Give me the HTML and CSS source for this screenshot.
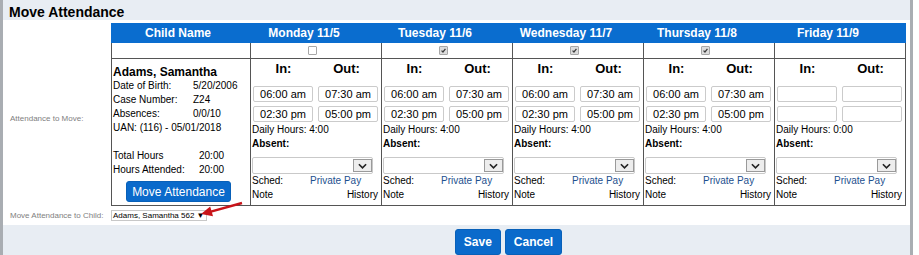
FILE: index.html
```html
<!DOCTYPE html>
<html lang="en">
<head>
    <meta charset="UTF-8">
    <title>Move Attendance</title>
    <link rel="stylesheet" href="styles.css">
</head>
<body>

<div class="dialog">
    <div class="title">Move Attendance</div>

    <div class="content">
        <div class="form-row">
            <div class="label label-mid">Attendance to Move:</div>
            <table class="att">
                <colgroup>
                    <col class="col-child">
                    <col class="col-day"><col class="col-day"><col class="col-day"><col class="col-day"><col class="col-day">
                </colgroup>
                <tr class="head">
                    <th class="child-h">Child Name</th>
                    <th>Monday 11/5</th>
                    <th>Tuesday 11/6</th>
                    <th>Wednesday 11/7</th>
                    <th>Thursday 11/8</th>
                    <th>Friday 11/9</th>
                </tr>
                <tr class="checks">
                    <td></td>
                    <td><span class="cb"></span></td>
                    <td><span class="cb on"><svg viewBox="0 0 9 9"><path d="M2 4.6 L3.8 6.4 L7 2.4" /></svg></span></td>
                    <td><span class="cb on"><svg viewBox="0 0 9 9"><path d="M2 4.6 L3.8 6.4 L7 2.4" /></svg></span></td>
                    <td><span class="cb on"><svg viewBox="0 0 9 9"><path d="M2 4.6 L3.8 6.4 L7 2.4" /></svg></span></td>
                    <td></td>
                </tr>
                <tr class="main">
                    <td class="child">
                        <div class="name">Adams, Samantha</div>
                        <div class="info"><span>Date of Birth:</span><span>5/20/2006</span></div>
                        <div class="info"><span>Case Number:</span><span>Z24</span></div>
                        <div class="info"><span>Absences:</span><span>0/0/10</span></div>
                        <div class="line">UAN: (116) - 05/01/2018</div>
                        <div class="totals first"><span>Total Hours</span><span>20:00</span></div>
                        <div class="totals"><span>Hours Attended:</span><span>20:00</span></div>
                        <button class="btn move">Move Attendance</button>
                    </td>

                    <td class="day">
                        <div class="inout"><span>In:</span><span>Out:</span></div>
                        <div class="times"><input value="06:00 am"><input value="07:30 am"></div>
                        <div class="times"><input value="02:30 pm"><input value="05:00 pm"></div>
                        <div class="line">Daily Hours: 4:00</div>
                        <div class="line bold">Absent:</div>
                        <div class="sel"><span class="dd"><svg viewBox="0 0 10 6"><path d="M1 1 L5 5 L9 1" /></svg></span></div>
                        <div class="sched"><span>Sched:</span><span class="pay">Private Pay</span></div>
                        <div class="note"><span>Note</span><span>History</span></div>
                    </td>

                    <td class="day">
                        <div class="inout"><span>In:</span><span>Out:</span></div>
                        <div class="times"><input value="06:00 am"><input value="07:30 am"></div>
                        <div class="times"><input value="02:30 pm"><input value="05:00 pm"></div>
                        <div class="line">Daily Hours: 4:00</div>
                        <div class="line bold">Absent:</div>
                        <div class="sel"><span class="dd"><svg viewBox="0 0 10 6"><path d="M1 1 L5 5 L9 1" /></svg></span></div>
                        <div class="sched"><span>Sched:</span><span class="pay">Private Pay</span></div>
                        <div class="note"><span>Note</span><span>History</span></div>
                    </td>

                    <td class="day">
                        <div class="inout"><span>In:</span><span>Out:</span></div>
                        <div class="times"><input value="06:00 am"><input value="07:30 am"></div>
                        <div class="times"><input value="02:30 pm"><input value="05:00 pm"></div>
                        <div class="line">Daily Hours: 4:00</div>
                        <div class="line bold">Absent:</div>
                        <div class="sel"><span class="dd"><svg viewBox="0 0 10 6"><path d="M1 1 L5 5 L9 1" /></svg></span></div>
                        <div class="sched"><span>Sched:</span><span class="pay">Private Pay</span></div>
                        <div class="note"><span>Note</span><span>History</span></div>
                    </td>

                    <td class="day">
                        <div class="inout"><span>In:</span><span>Out:</span></div>
                        <div class="times"><input value="06:00 am"><input value="07:30 am"></div>
                        <div class="times"><input value="02:30 pm"><input value="05:00 pm"></div>
                        <div class="line">Daily Hours: 4:00</div>
                        <div class="line bold">Absent:</div>
                        <div class="sel"><span class="dd"><svg viewBox="0 0 10 6"><path d="M1 1 L5 5 L9 1" /></svg></span></div>
                        <div class="sched"><span>Sched:</span><span class="pay">Private Pay</span></div>
                        <div class="note"><span>Note</span><span>History</span></div>
                    </td>

                    <td class="day">
                        <div class="inout"><span>In:</span><span>Out:</span></div>
                        <div class="times"><input value=""><input value=""></div>
                        <div class="times"><input value=""><input value=""></div>
                        <div class="line">Daily Hours: 0:00</div>
                        <div class="line bold">Absent:</div>
                        <div class="sel"><span class="dd"><svg viewBox="0 0 10 6"><path d="M1 1 L5 5 L9 1" /></svg></span></div>
                        <div class="sched"><span>Sched:</span><span class="pay">Private Pay</span></div>
                        <div class="note"><span>Note</span><span>History</span></div>
                    </td>
                </tr>
            </table>
        </div>

        <div class="form-row to-child">
            <div class="label">Move Attendance to Child:</div>
            <span class="child-select">Adams, Samantha 562 &#9660;</span>
            <svg class="arrow" viewBox="0 0 46 18">
                <line x1="44" y1="3" x2="12" y2="11.8" />
                <polygon points="3,14 15,16.2 12.2,6.6" />
            </svg>
        </div>
    </div>

    <div class="footer">
        <button class="btn">Save</button>
        <button class="btn">Cancel</button>
    </div>
</div>

</body>
</html>
```

FILE: styles.css
```css
body {
    margin: 0;
    background: #fff;
    font-family: "Liberation Sans", Arial, sans-serif;
    color: #000;
}

.dialog {
    width: 907px;
    border-left: 3px solid #a9adb2;
    border-right: 3px solid #a9adb2;
}

.title {
    height: 20px;
    line-height: 24px;
    padding-left: 6px;
    background: #e8edf3;
    font-size: 14px;
    font-weight: bold;
}

.content {
    padding: 3px 0 0 7px;
    background: #fff;
}

.form-row {
    display: flex;
    align-items: center;
}

.label {
    width: 101px;
    font-size: 8px;
    color: #808080;
}
.label-mid {
    padding-top: 7px;
}

/* attendance grid */
.att {
    border-collapse: collapse;
    table-layout: fixed;
    width: 794px;
    font-size: 10px;
}
.col-child {
    width: 139px;
}
.col-day {
    width: 131px;
}

.head th {
    height: 18px;
    padding: 0 24px 0 0;
    background: #0a6dcf;
    border: 1px solid #0a6dcf;
    color: #fff;
    font-size: 12px;
    font-weight: bold;
    text-align: center;
}
.head .child-h {
    padding-right: 6px;
}

.checks td, .main td {
    border: 1px solid #555;
}
.checks td {
    height: 15px;
    padding: 0 7px 0 0;
    text-align: center;
    line-height: 0;
}

.cb {
    display: inline-block;
    width: 9px;
    height: 9px;
    box-sizing: border-box;
    border: 1px solid #a7a7a7;
    border-radius: 1px;
    background: #fff;
}
.cb.on {
    background: #dcdcdc;
}
.cb svg {
    width: 7px;
    height: 7px;
    fill: none;
    stroke: #3c3c3c;
    stroke-width: 1.6;
}

.main td {
    vertical-align: top;
    line-height: 14px;
}

/* child column */
.child {
    padding: 6px 2px 3px 1px;
}
.name {
    font-size: 12px;
    font-weight: bold;
}
.info {
    display: grid;
    grid-template-columns: 80px auto;
}
.totals {
    display: grid;
    grid-template-columns: 86px auto;
}
.totals.first {
    margin-top: 14px;
}

.btn {
    height: 26px;
    padding: 0 8px;
    border: 1px solid #0860b8;
    border-radius: 3px;
    background: #0a6acb;
    color: #fff;
    font-family: "Liberation Sans", Arial, sans-serif;
    font-size: 12px;
    font-weight: bold;
}
.btn.move {
    display: block;
    width: 105px;
    height: 21px;
    margin: 4px 0 0 13px;
    padding: 0;
    font-size: 12px;
    font-weight: normal;
}

/* day columns */
.day {
    padding: 2px 2px 3px 1px;
}
.inout {
    display: grid;
    grid-template-columns: 63px 63px;
    height: 16px;
    line-height: 16px;
    margin-bottom: 9px;
    font-size: 13px;
    font-weight: bold;
    text-align: center;
}
.times {
    display: flex;
    gap: 5px;
    margin: 0 0 4px 1px;
}
.times input {
    width: 60px;
    height: 16px;
    box-sizing: border-box;
    padding: 0;
    border: 1px solid #cbcbcb;
    border-radius: 2px;
    font-family: "Liberation Sans", Arial, sans-serif;
    font-size: 11px;
    text-align: center;
    color: #000;
}
.times + .times {
    margin-bottom: 1px;
}
.bold {
    font-weight: bold;
}

.sel {
    display: flex;
    justify-content: flex-end;
    width: 121px;
    height: 17px;
    box-sizing: border-box;
    margin-top: 6px;
    padding: 1px 0;
    border: 1px solid #c9c9c9;
    border-radius: 2px;
}
.dd {
    display: flex;
    align-items: center;
    justify-content: center;
    width: 19px;
    box-sizing: border-box;
    border: 1px solid #9a9a9a;
    background: #ededed;
}
.dd svg {
    width: 9px;
    height: 6px;
    fill: none;
    stroke: #222;
    stroke-width: 1.8;
}

.sched {
    display: grid;
    grid-template-columns: 58px auto;
}
.pay {
    color: #1d4f8e;
}
.note {
    display: flex;
    justify-content: space-between;
    padding-right: 1px;
}

/* second form row */
.to-child {
    position: relative;
    height: 19px;
}
.child-select {
    padding: 0 1px;
    border: 1px solid #c8c8c8;
    font-size: 8px;
    line-height: 9px;
}
.arrow {
    position: absolute;
    left: 188px;
    top: -6px;
    width: 46px;
    height: 18px;
}
.arrow line {
    stroke: #c8141a;
    stroke-width: 2.4;
}
.arrow polygon {
    fill: #c8141a;
}

.footer {
    display: flex;
    justify-content: center;
    gap: 4px;
    height: 28px;
    padding: 4px 0 0 104px;
    background: #e8edf3;
}
```
